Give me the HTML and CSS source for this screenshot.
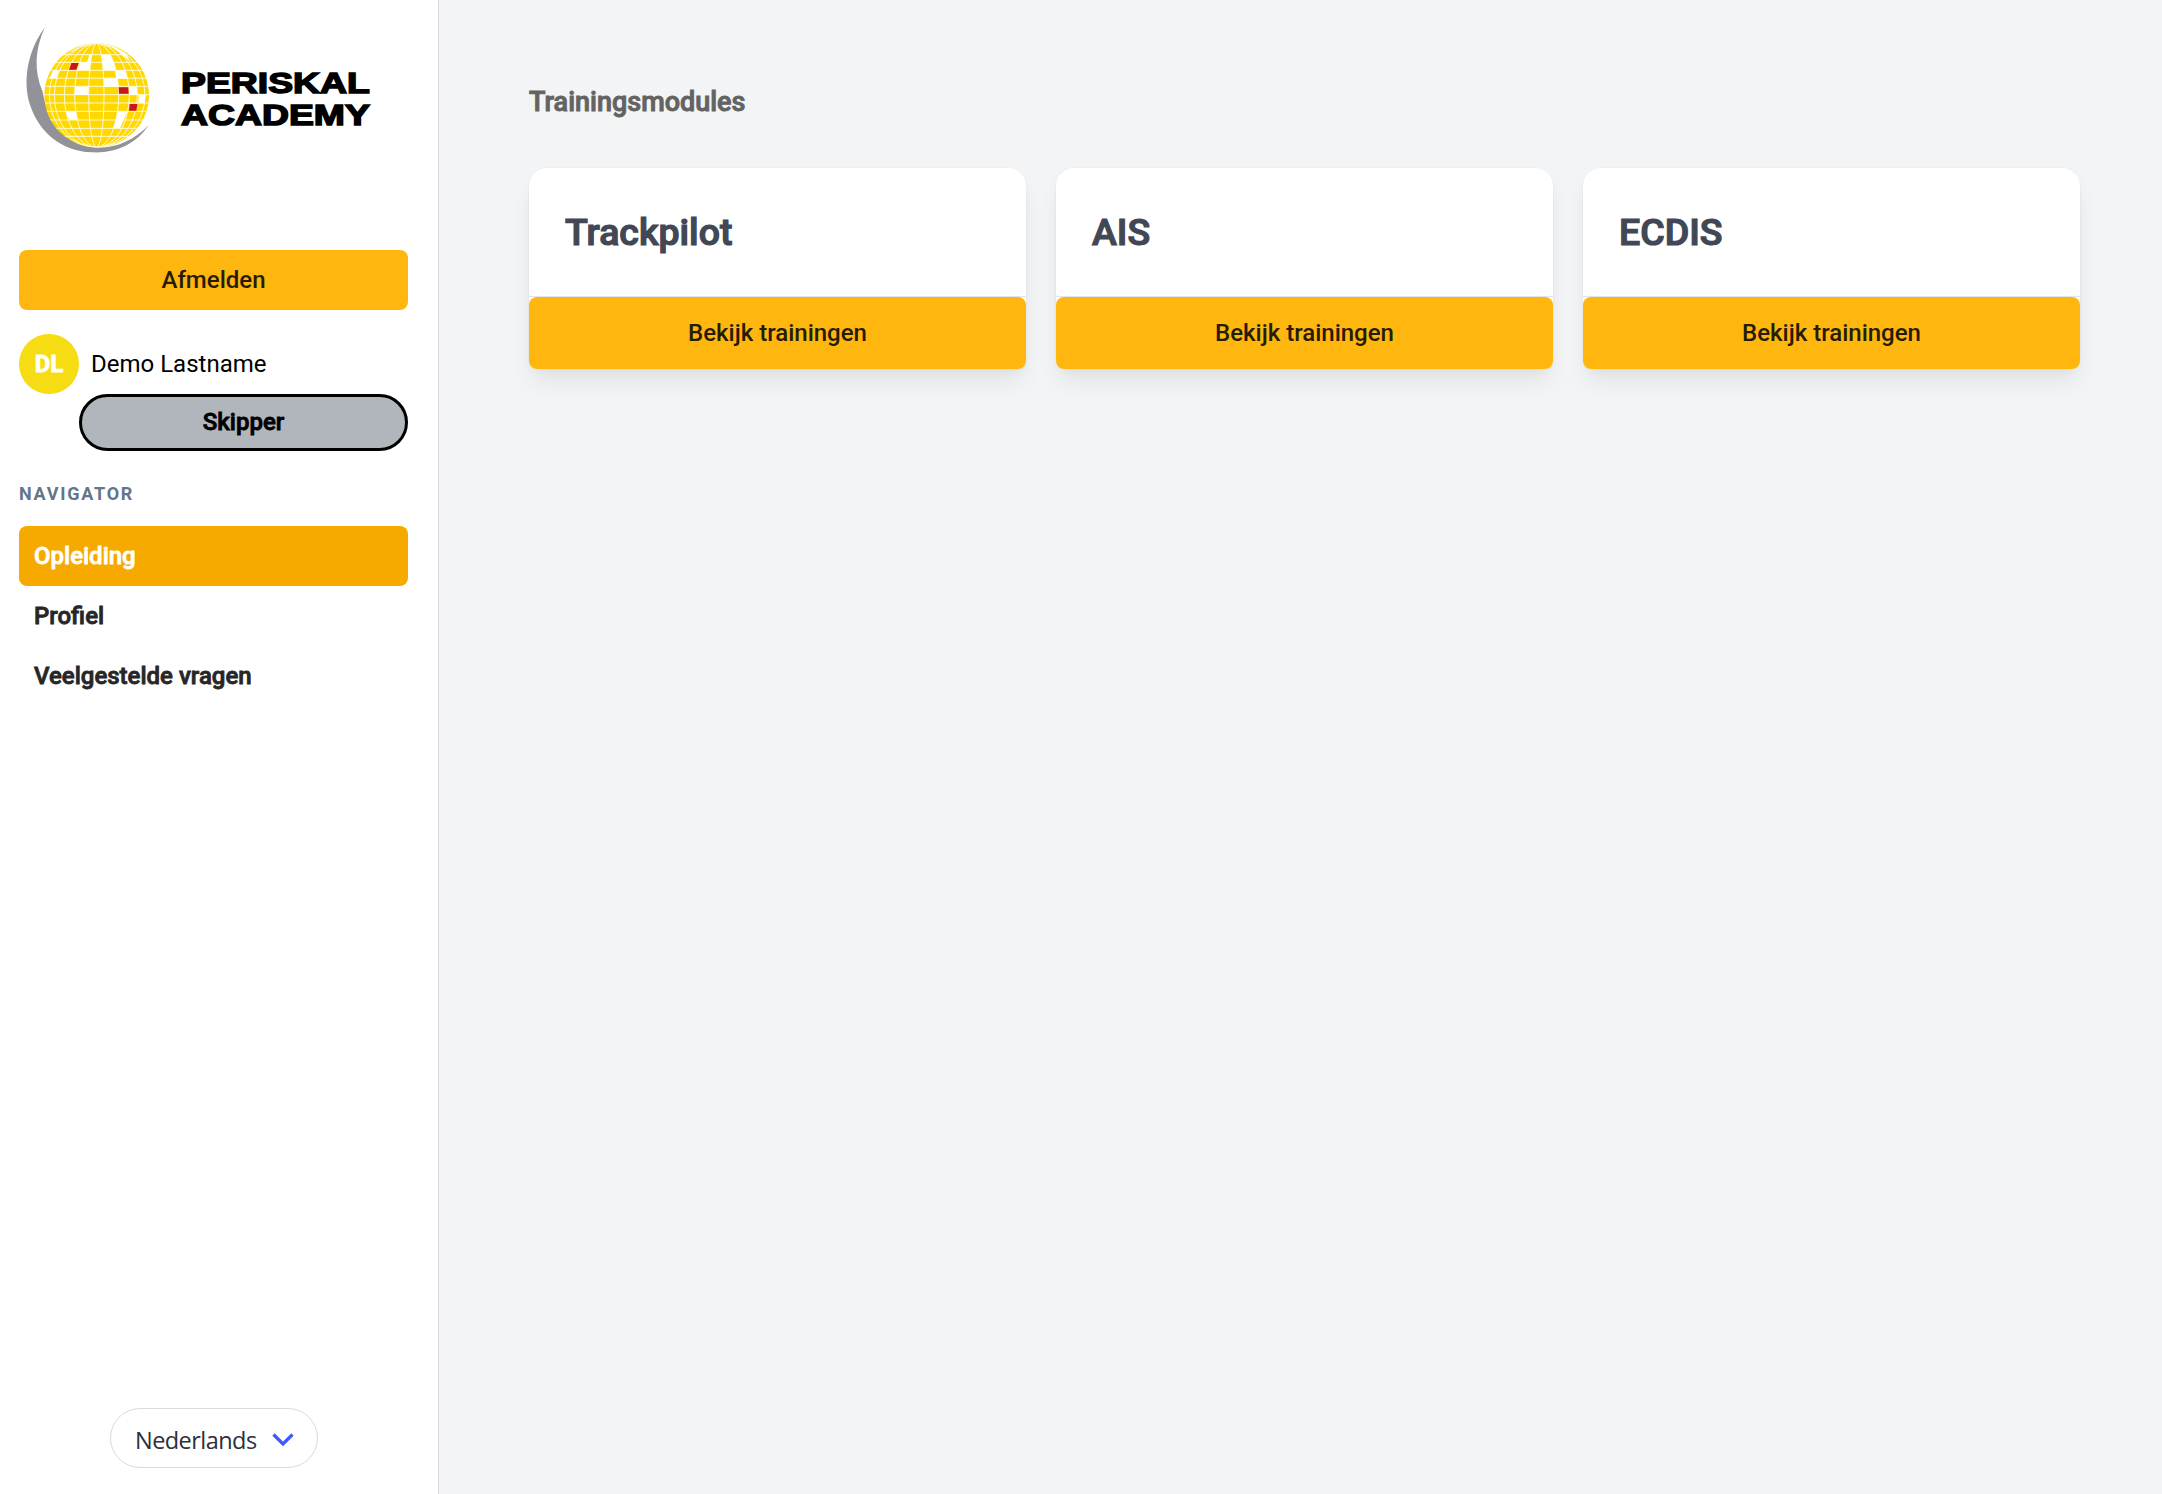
FILE: index.html
```html
<!DOCTYPE html>
<html lang="nl">
<head>
<meta charset="utf-8">
<title>Periskal Academy</title>
<link rel="stylesheet" href="styles.css">
</head>
<body>
<aside class="sidebar">
  <div class="brand">
    <svg class="brand-globe" viewBox="0 0 480 480" aria-hidden="true">
      <defs><clipPath id="ball"><ellipse cx="260" cy="256" rx="157" ry="156"/></clipPath></defs>
      <path fill="#929398" d="M104 53C60 112 37 195 57 275C84 365 150 422 245 427C320 431 380 400 416 346C370 392 315 418 250 412C170 400 115 345 98 245C70 180 76 115 104 53Z"/>
      <g clip-path="url(#ball)">
        <rect x="100" y="98" width="320" height="316" fill="#ffd800"/>
        <path fill="none" stroke="#fff9d2" stroke-width="3" d="M260 100A142 156 0 0 0 260 412M260 100A127 156 0 0 0 260 412M260 100A97 156 0 0 0 260 412M260 100A66 156 0 0 0 260 412M260 100A24 156 0 0 0 260 412M260 100A22 156 0 0 1 260 412M260 100A66 156 0 0 1 260 412M260 100A98 156 0 0 1 260 412M260 100A122 156 0 0 1 260 412M260 100A145 156 0 0 1 260 412M100 134h320M100 157h320M100 181h320M100 204.500h320M100 229h320M100 254h320M100 279h320M100 304h320M100 330h320M100 355h320M100 379h320"/>
        <path fill="#fff" d="M245 134L240 181H203L211 157H231L238 134ZM276 134H300L311 157L317 181H345L352 206H319L315 181H280L277 157ZM130 181H148L140 205H118ZM282 205H322L326 230H282ZM195 230H236V255H194ZM357 230H380L383 255H357ZM386 255H407L404 280H385ZM167 304H197L204 330H178ZM322 304H353L341 330L330 355H309L318 330ZM298 104L345 128L365 160C346 140 323 123 298 104Z"/>
        <path fill="#c9151b" d="M184 159h22l-7 20h-22zM326 232h29l1 19h-29zM359 282h23l-3 20h-22z"/>
      </g>
    </svg>
    <div class="brand-name"><span>PERISKAL</span><span>ACADEMY</span></div>
  </div>
  <button class="btn sign-out">Afmelden</button>
  <div class="user"><span class="avatar">DL</span><span class="user-name">Demo Lastname</span></div>
  <div class="role">Skipper</div>
  <h2 class="nav-title">NAVIGATOR</h2>
  <nav class="nav">
    <a class="nav-item active">Opleiding</a>
    <a class="nav-item">Profiel</a>
    <a class="nav-item">Veelgestelde vragen</a>
  </nav>
  <button class="language"><span>Nederlands</span>
    <svg width="22" height="14" viewBox="0 0 22 14" aria-hidden="true"><path d="M1.500 1.500L11 11L20.500 1.500" fill="none" stroke="#4159ff" stroke-width="3.300"/></svg>
  </button>
</aside>
<main class="content">
  <h1 class="page-title">Trainingsmodules</h1>
  <div class="cards">
    <section class="card"><h2 class="card-title">Trackpilot</h2><button class="btn card-btn">Bekijk trainingen</button></section>
    <section class="card"><h2 class="card-title">AIS</h2><button class="btn card-btn">Bekijk trainingen</button></section>
    <section class="card"><h2 class="card-title">ECDIS</h2><button class="btn card-btn">Bekijk trainingen</button></section>
  </div>
</main>
</body>
</html>
```
FILE: styles.css
```css
* { box-sizing: border-box; }
body { margin: 0; display: flex; min-height: 100vh; background: #f3f4f6; font: 400 24px/36px Roboto, sans-serif; color: #000; }
h1, h2 { margin: 0; }
button { font: inherit; border: 0; padding: 0; }
.sidebar { width: 439px; height: 1494px; flex: none; display: flex; flex-direction: column; background: #fff; border-right: 1px solid #d7d9dd; padding: 10px 30px 26px 19px; }
.brand { display: flex; height: 160px; margin-left: -9px; }
.brand-globe { width: 160px; height: 160px; flex: none; }
.brand-name { display: flex; flex-direction: column; align-items: flex-start; padding: 57px 0 0 11px; font: 700 30px/32px "Liberation Sans", Arial, sans-serif; -webkit-text-stroke: 1.5px #000; }
.brand-name span { transform: scaleX(1.245); transform-origin: left; }
.btn { height: 60px; border-radius: 8px; background: #ffb60f; color: #261c02; font-weight: 500; }
.sign-out { margin-top: 80px; }
.user { display: flex; align-items: center; gap: 12px; margin-top: 24px; }
.avatar { width: 60px; height: 60px; border-radius: 50%; background: #f6dc12; color: #fff; font-weight: 700; -webkit-text-stroke: 0.8px; display: grid; place-items: center; }
.role { margin-left: 60px; height: 57px; border: 3px solid #000; border-radius: 29px; background: #b1b5bc; padding-bottom: 2px; display: grid; place-items: center; font-weight: 500; -webkit-text-stroke: 0.8px; }
.nav-title { margin-top: 29px; font-size: 18px; line-height: 28px; font-weight: 700; letter-spacing: 1.75px; color: #64748b; }
.nav { margin-top: 18px; display: flex; flex-direction: column; }
.nav-item { height: 60px; padding: 12px 15px; border-radius: 8px; color: #262626; font-weight: 500; -webkit-text-stroke: 0.8px; }
.nav-item.active { background: #f6aa00; color: #fff; }
.language { margin: auto 90px 0 91px; height: 60px; border: 1px solid #d9d9e2; border-radius: 30px; background: #fff; color: #2b303b; display: flex; align-items: center; padding: 3px 23px 0 24px; justify-content: space-between; font: 400 23.500px/36px "Open Sans", sans-serif; letter-spacing: -0.55px; }
.content { flex: 1; padding: 84px 82px 0 90px; }
.page-title { font-size: 27px; line-height: 36px; font-weight: 500; color: #636363; -webkit-text-stroke: 0.9px; }
.cards { display: grid; grid-template-columns: repeat(3, 1fr); gap: 30px; margin-top: 48px; }
.card { background: #fff; border-radius: 18px 18px 8px 8px; display: flex; flex-direction: column; box-shadow: 0 0 0 1px rgba(0,0,0,.02), 0 15px 23px -4px rgba(0,0,0,.08), 0 5px 12px -3px rgba(0,0,0,.03); }
.card-title { height: 129px; padding: 38px 36px 0; font-size: 37.500px; line-height: 52px; font-weight: 500; color: #414755; -webkit-text-stroke: 1.2px; border-bottom: 1px solid #e2e4ec; }
.card-btn { height: 72px; }
```
